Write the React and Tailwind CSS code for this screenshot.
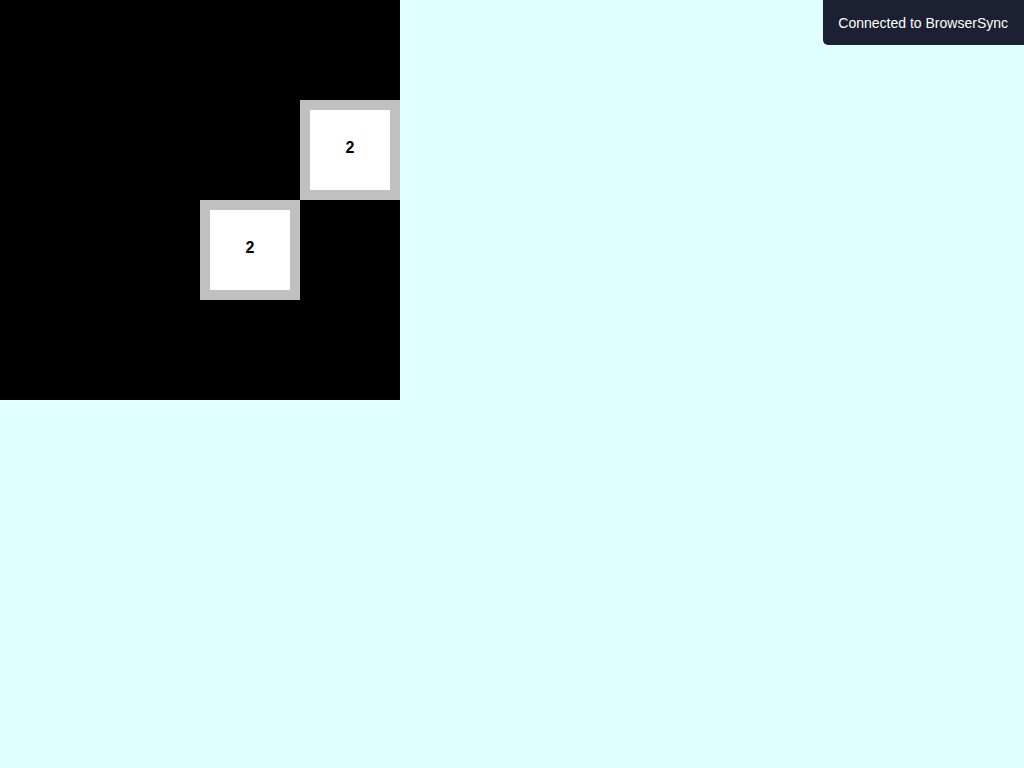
import React from "react"

const board = [
  [0, 0, 0, 0],
  [0, 0, 0, 2],
  [0, 0, 2, 0],
  [0, 0, 0, 0],
]

function Cell({ value }) {
  if (!value) return <div className="w-[100px] h-[100px] bg-black" />
  return (
    <div className="w-[100px] h-[100px] border-[10px] border-[#c0c0c0] bg-white flex items-center justify-center">
      <span className="text-base font-bold text-black leading-none -mt-[5px]">{value}</span>
    </div>
  )
}

export default function App() {
  return (
    <div className="min-h-[768px] bg-[#e0ffff] font-['Liberation_Sans',Arial,sans-serif]">
      {/* Board */}
      <div className="grid grid-cols-[repeat(4,100px)] w-[400px] bg-black">
        {board.flat().map((v, i) => (
          <Cell key={i} value={v} />
        ))}
      </div>

      {/* BrowserSync notice */}
      <div className="fixed top-0 right-0 h-[45px] bg-[#1b2032] text-white text-[14px] leading-[15px] pl-[15px] pr-[16px] pt-[16px] rounded-bl-[5px]">
        Connected to BrowserSync
      </div>
    </div>
  )
}
